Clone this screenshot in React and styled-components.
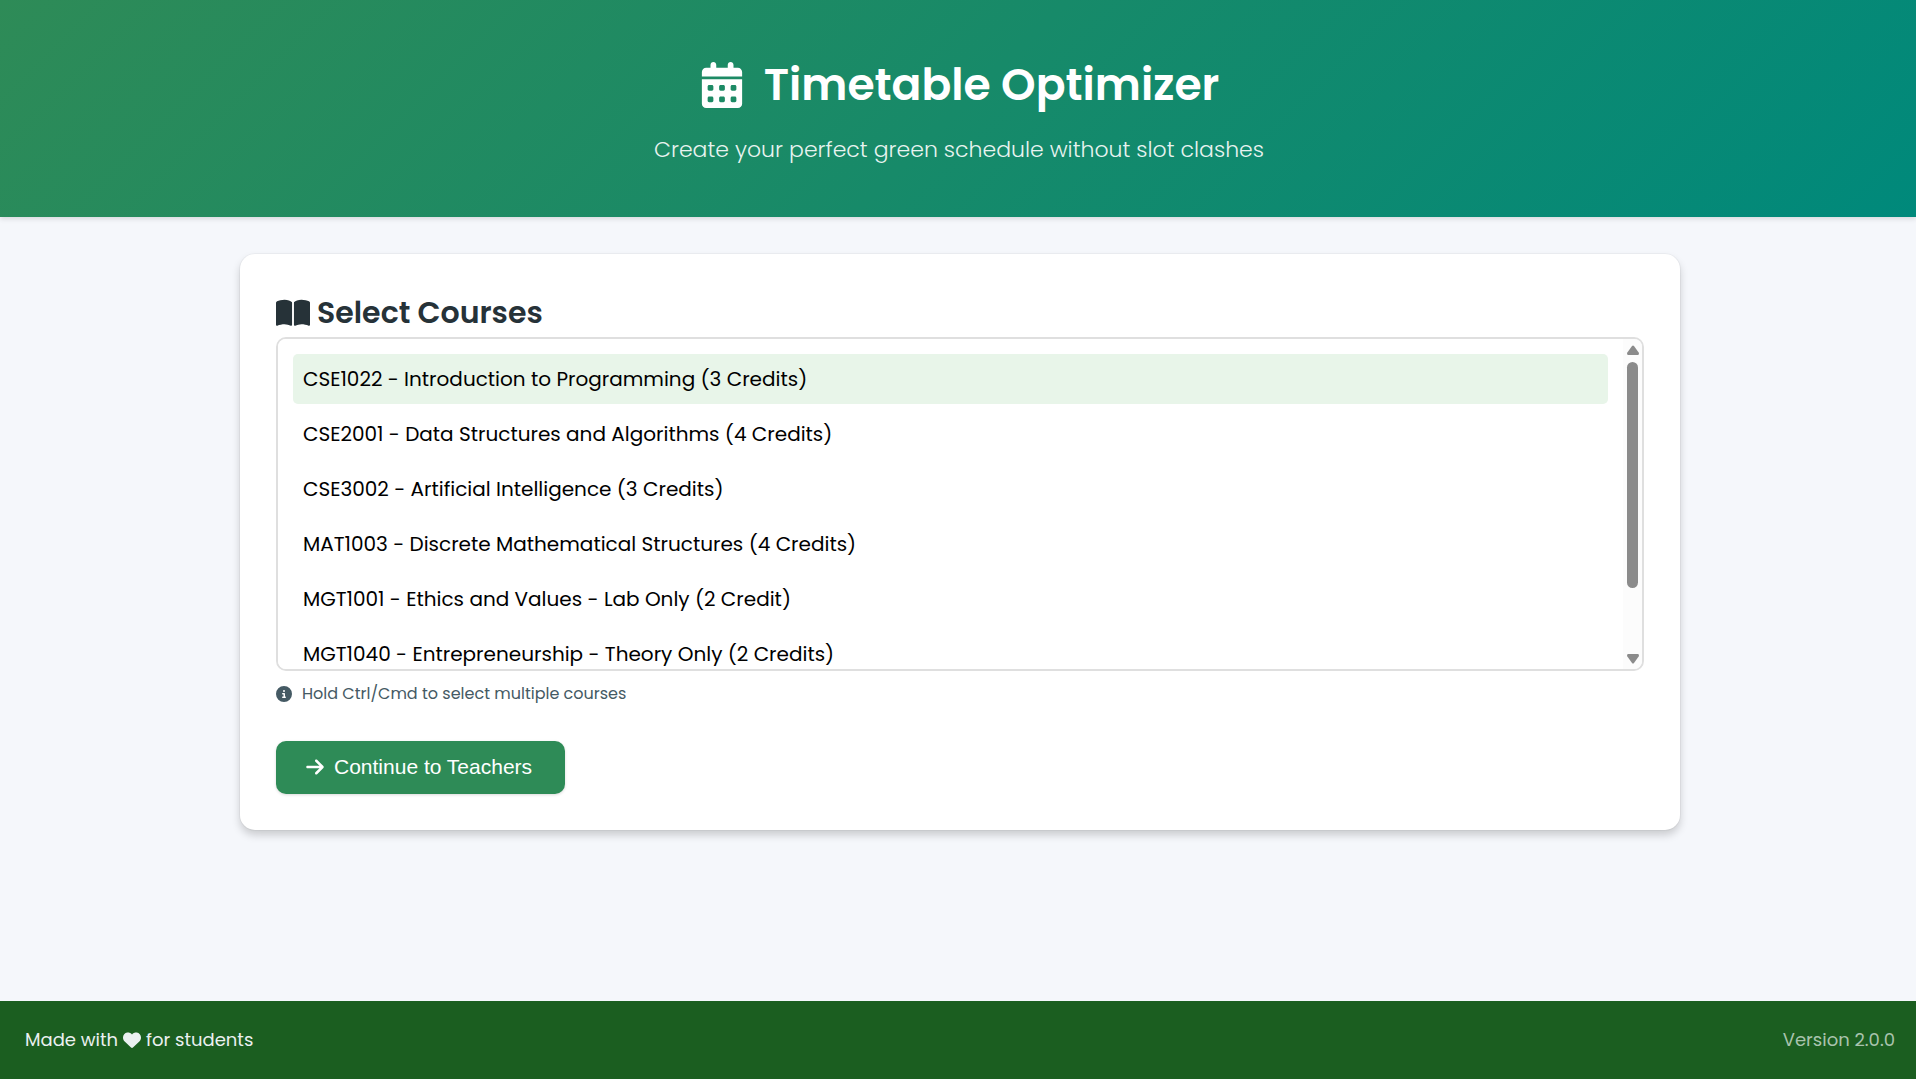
import React, { useState } from "react";
import styled, { createGlobalStyle } from "styled-components";
import {
  FaArrowRight,
  FaBookOpen,
  FaCalendarDays,
  FaCircleInfo,
  FaHeart,
} from "react-icons/fa6";

const GlobalStyle = createGlobalStyle`
  *, *::before, *::after { box-sizing: border-box; }
  body {
    margin: 0;
    background: #f5f7fb;
    color: #263238;
    font-family: Poppins, Inter, "Open Sans", sans-serif;
  }
`;

const Page = styled.div`
  display: flex;
  flex-direction: column;
  min-height: 100vh;
`;

const Header = styled.header`
  display: flex;
  flex-direction: column;
  align-items: center;
  gap: 13px;
  padding: 50px 2px 50px 4px;
  background: linear-gradient(135deg, #2e8b57, #00897b);
  box-shadow: 0 2px 5px rgba(0, 0, 0, 0.12);
  color: #fff;
`;

const Title = styled.h1`
  display: flex;
  align-items: center;
  gap: 19px;
  margin: 0;
  font-size: 44px;
  font-weight: 600;
  line-height: 70px;
`;

const Subtitle = styled.p`
  margin: 0;
  font-size: 22px;
  font-weight: 300;
  line-height: 34px;
  opacity: 0.9;
`;

const Main = styled.main`
  flex: 1;
  padding: 37px 36px 37px 40px;
`;

const Card = styled.section`
  max-width: 1440px;
  margin: 0 auto;
  padding: 36px;
  border-radius: 15px;
  background: #fff;
  box-shadow: 0 0 0 1px rgba(0, 0, 0, 0.03), 0 5px 8px rgba(0, 0, 0, 0.18);
`;

const Heading = styled.h2`
  margin: 0 0 2px;
  font-size: 30px;
  font-weight: 600;
  line-height: 45px;

  label {
    display: flex;
    align-items: center;
    gap: 7px;
  }
`;

const ListFrame = styled.div`
  display: flex;
  height: 334px;
  border: 2px solid #dfdfdf;
  border-radius: 10px;
  overflow: hidden;
`;

const CourseSelect = styled.select`
  flex: 1;
  min-width: 0;
  padding: 15px;
  border: 0;
  outline: 0;
  background: #fff;
  color: #000;
  font: inherit;
  font-size: 20px;
  scrollbar-width: none;
`;

const Course = styled.option`
  min-height: 50px;
  margin-bottom: 5px;
  padding: 10px;
  border-radius: 5px;
  color: #000;
  line-height: 30px;

  &:checked {
    background: #e8f5e9 linear-gradient(#e8f5e9, #e8f5e9);
    color: #000;
  }
`;

const ScrollTrack = styled.div`
  display: flex;
  flex-direction: column;
  align-items: center;
  gap: 7px;
  width: 19px;
  padding: 6px 0 5px;
  background: #fcfcfc;
`;

const ScrollArrow = styled.svg`
  width: 12px;
  height: 10px;
  fill: #8b8b8b;
`;

const ScrollThumb = styled.div`
  width: 11px;
  height: 226px;
  margin-bottom: auto;
  border-radius: 6px;
  background: #8b8b8b;
`;

const Hint = styled.p`
  display: flex;
  align-items: center;
  gap: 10px;
  margin: 10px 0 35px;
  color: #455a64;
  font-size: 16px;
  line-height: 25px;
`;

const ContinueButton = styled.button`
  display: inline-flex;
  align-items: center;
  gap: 9px;
  height: 53px;
  padding: 0 33px 2px 29px;
  border: 0;
  border-radius: 10px;
  background: #2e8b57;
  box-shadow: 0 1px 3px rgba(0, 0, 0, 0.15);
  color: #fff;
  font-family: "Liberation Sans", Arial, sans-serif;
  font-size: 21px;
  cursor: pointer;
`;

const Footer = styled.footer`
  display: flex;
  align-items: center;
  justify-content: space-between;
  padding: 24px 21px 24px 25px;
  background: #1b5e20;
  color: #ebf0f0;
  font-size: 18px;
  line-height: 30px;
`;

const Credit = styled.span`
  display: flex;
  align-items: center;
  gap: 5px;
`;

const Version = styled.span`
  color: #a9c3ad;
`;

const courses = [
  ["CSE1022", "Introduction to Programming (3 Credits)"],
  ["CSE2001", "Data Structures and Algorithms (4 Credits)"],
  ["CSE3002", "Artificial Intelligence (3 Credits)"],
  ["MAT1003", "Discrete Mathematical Structures (4 Credits)"],
  ["MGT1001", "Ethics and Values - Lab Only (2 Credit)"],
  ["MGT1040", "Entrepreneurship - Theory Only (2 Credits)"],
];

export default function App() {
  const [selected, setSelected] = useState(["CSE1022"]);

  return (
    <>
      <GlobalStyle />
      <Page>
        <Header>
          <Title>
            <FaCalendarDays size={46} aria-hidden="true" />
            Timetable Optimizer
          </Title>
          <Subtitle>Create your perfect green schedule without slot clashes</Subtitle>
        </Header>
        <Main>
          <Card>
            <Heading>
              <label htmlFor="courses">
                <FaBookOpen size={34} aria-hidden="true" />
                Select Courses
              </label>
            </Heading>
            <ListFrame>
              <CourseSelect
                id="courses"
                multiple
                value={selected}
                onChange={(e) =>
                  setSelected(Array.from(e.target.selectedOptions, (o) => o.value))
                }
              >
                {courses.map(([code, name]) => (
                  <Course key={code} value={code}>{`${code} - ${name}`}</Course>
                ))}
              </CourseSelect>
              <ScrollTrack aria-hidden="true">
                <ScrollArrow viewBox="0 0 12 10">
                  <path d="M5 1Q6 0 7 1L12 8Q12 10 11 10H1Q0 10 0 8Z" />
                </ScrollArrow>
                <ScrollThumb />
                <ScrollArrow viewBox="0 0 12 10">
                  <path d="M5 9Q6 10 7 9L12 2Q12 0 11 0H1Q0 0 0 2Z" />
                </ScrollArrow>
              </ScrollTrack>
            </ListFrame>
            <Hint>
              <FaCircleInfo aria-hidden="true" />
              Hold Ctrl/Cmd to select multiple courses
            </Hint>
            <ContinueButton type="button">
              <FaArrowRight size={20} aria-hidden="true" />
              Continue to Teachers
            </ContinueButton>
          </Card>
        </Main>
        <Footer>
          <Credit>
            Made with <FaHeart aria-hidden="true" /> for students
          </Credit>
          <Version>Version 2.0.0</Version>
        </Footer>
      </Page>
    </>
  );
}
